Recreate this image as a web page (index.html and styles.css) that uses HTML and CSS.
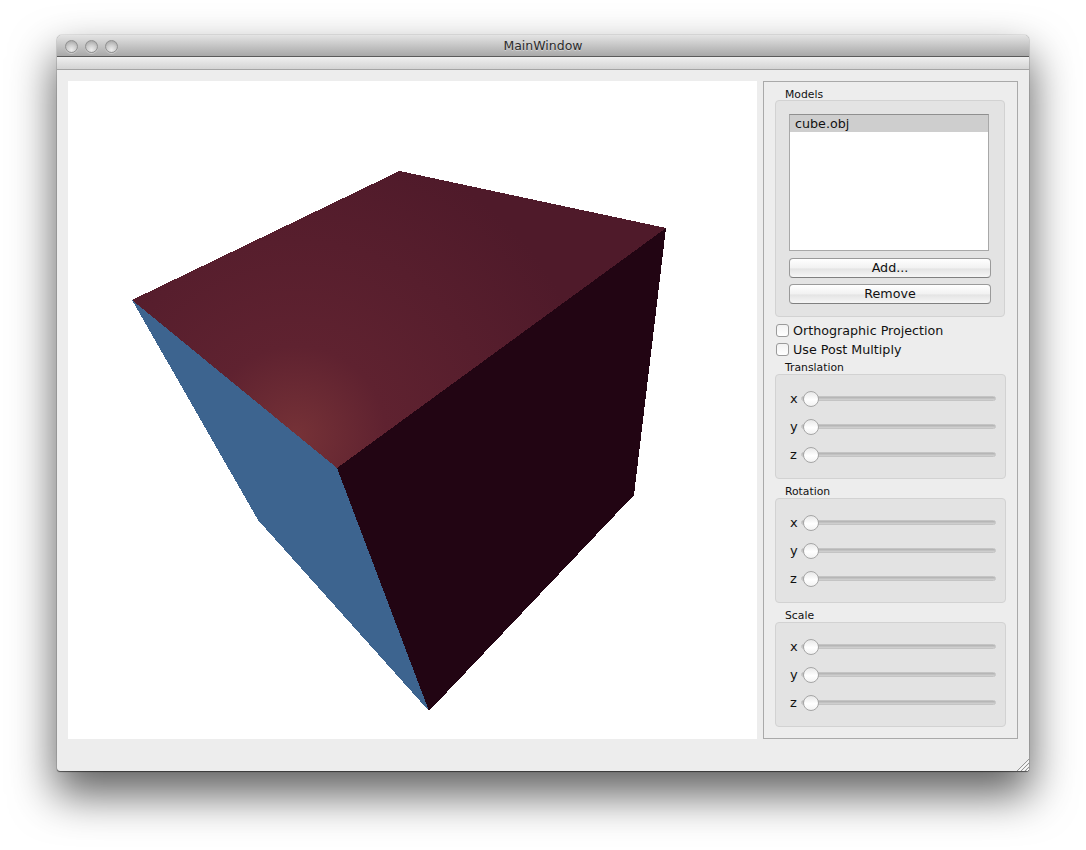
FILE: index.html
```html
<!DOCTYPE html>
<html lang="en">
<head>
    <meta charset="UTF-8">
    <title>MainWindow</title>
    <link rel="stylesheet" href="styles.css">
</head>
<body>
    <div class="window">
        <div class="titlebar">
            <div class="lights">
                <span class="light"></span>
                <span class="light"></span>
                <span class="light"></span>
            </div>
            <div class="title">MainWindow</div>
        </div>
        <div class="toolbar"></div>
        <div class="content">
            <svg class="viewport" viewBox="68 81 689 658" width="689" height="658" shape-rendering="crispEdges">
                <defs>
                    <radialGradient id="topGlow" gradientUnits="userSpaceOnUse" cx="296" cy="436" r="300">
                        <stop offset="0" stop-color="#763237"/>
                        <stop offset="0.3" stop-color="#5f2230"/>
                        <stop offset="1" stop-color="#4f1a2a"/>
                    </radialGradient>
                </defs>
                <polygon points="132,300 337,468 429,711 258,520" fill="#3d648f"/>
                <polygon points="666,228 634,495 429,711 337,468" fill="#220513"/>
                <polygon points="399.5,171 666,228 337,468 132,300" fill="url(#topGlow)"/>
            </svg>
            <div class="side">
                <div class="group-label models-label">Models</div>
                <div class="group models">
                    <div class="list">
                        <div class="list-item">cube.obj</div>
                    </div>
                    <button class="btn" type="button">Add...</button>
                    <button class="btn" type="button">Remove</button>
                </div>
                <label class="check first-check"><span class="box"></span>Orthographic Projection</label>
                <label class="check"><span class="box"></span>Use Post Multiply</label>

                <div class="group-label translation">Translation</div>
                <div class="group sliders">
                    <div class="row"><span class="axis">x</span><div class="track"><span class="thumb"></span></div></div>
                    <div class="row"><span class="axis">y</span><div class="track"><span class="thumb"></span></div></div>
                    <div class="row"><span class="axis">z</span><div class="track"><span class="thumb"></span></div></div>
                </div>

                <div class="group-label next">Rotation</div>
                <div class="group sliders">
                    <div class="row"><span class="axis">x</span><div class="track"><span class="thumb"></span></div></div>
                    <div class="row"><span class="axis">y</span><div class="track"><span class="thumb"></span></div></div>
                    <div class="row"><span class="axis">z</span><div class="track"><span class="thumb"></span></div></div>
                </div>

                <div class="group-label next">Scale</div>
                <div class="group sliders">
                    <div class="row"><span class="axis">x</span><div class="track"><span class="thumb"></span></div></div>
                    <div class="row"><span class="axis">y</span><div class="track"><span class="thumb"></span></div></div>
                    <div class="row"><span class="axis">z</span><div class="track"><span class="thumb"></span></div></div>
                </div>
            </div>
        </div>
        <svg class="grip" viewBox="0 0 12 12" width="12" height="12">
            <path d="M0 12 L12 0 M4 12 L12 4 M8 12 L12 8" stroke="#969696" stroke-width="1" fill="none"/>
            <path d="M2 12 L12 2 M6 12 L12 6 M10 12 L12 10" stroke="#fafafa" stroke-width="1" fill="none"/>
        </svg>
    </div>
</body>
</html>
```

FILE: styles.css
```css
html, body {
    margin: 0;
    height: 850px;
    background-color: #ffffff;
    overflow: hidden;
}

body {
    padding: 35px 0 0 57px;
    box-sizing: border-box;
    font-family: 'DejaVu Sans', 'Open Sans', sans-serif;
    color: #111111;
}

.window {
    position: relative;
    width: 972px;
    height: 736px;
    display: flex;
    flex-direction: column;
    background-color: #ededed;
    border-radius: 5px 5px 3px 3px;
    box-shadow: 0 22px 44px 2px rgba(0, 0, 0, 0.62), 0 0 1px rgba(0, 0, 0, 0.7), 0 1px 1px rgba(0, 0, 0, 0.5);
}

.titlebar {
    height: 21px;
    flex: none;
    position: relative;
    display: flex;
    align-items: center;
    justify-content: center;
    background: linear-gradient(#e4e4e4, #a8a8a8);
    border-bottom: 1px solid #5a5a5a;
    border-radius: 5px 5px 0 0;
}

.lights {
    position: absolute;
    left: 8px;
    top: 5px;
    display: flex;
    gap: 7px;
}

.light {
    box-sizing: border-box;
    width: 13px;
    height: 13px;
    border-radius: 50%;
    border: 1px solid #909090;
    background: radial-gradient(circle at 50% 80%, #ececec 0, #cfcfcf 45%, #a6a6a6 90%);
    box-shadow: 0 1px 0 rgba(255, 255, 255, 0.35);
}

.title {
    font-size: 12.5px;
    color: #2c2c2c;
    text-shadow: 0 1px 0 rgba(255, 255, 255, 0.4);
}

.toolbar {
    height: 12px;
    flex: none;
    background: linear-gradient(#efefef, #d4d4d4);
    border-bottom: 1px solid #a4a4a4;
}

.content {
    flex: 1;
    display: flex;
    gap: 6px;
    padding: 11px 11px 31px 11px;
    min-height: 0;
}

.viewport {
    display: block;
    flex: none;
    background-color: #ffffff;
}

.side {
    width: 255px;
    height: 658px;
    box-sizing: border-box;
    flex: none;
    border: 1px solid #a9a9a9;
    padding: 5px 11px 0 11px;
}

.group-label {
    font-size: 10.8px;
    line-height: 13px;
    height: 13px;
    margin-left: 10px;
    color: #111111;
}

.models-label {
    line-height: 15px;
}

.group-label.translation {
    margin-top: 2px;
}

.group-label.next {
    margin-top: 6px;
}

.group {
    box-sizing: border-box;
    width: 231px;
    background-color: #e3e3e3;
    border: 1px solid #d2d2d2;
    border-radius: 4px;
}

.models {
    width: 230px;
    height: 217px;
    padding: 13px 13px 0 13px;
}

.list {
    box-sizing: border-box;
    width: 200px;
    height: 137px;
    margin-bottom: 7px;
    background-color: #ffffff;
    border: 1px solid #a8a8a8;
    border-top-color: #8f8f8f;
}

.list-item {
    height: 17px;
    padding-left: 5px;
    font-size: 12.7px;
    line-height: 17px;
    background-color: #cecece;
}

.btn {
    display: block;
    box-sizing: border-box;
    width: 202px;
    height: 20px;
    padding: 0;
    margin-bottom: 6px;
    font-family: inherit;
    font-size: 12.7px;
    line-height: 18px;
    color: #111111;
    background: linear-gradient(#ffffff, #f1f1f1 50%, #e4e4e4 55%, #f6f6f6);
    border: 1px solid #9a9a9a;
    border-bottom-color: #808080;
    border-radius: 4px;
}

.check {
    display: flex;
    align-items: center;
    gap: 4px;
    height: 19px;
    margin-left: 1px;
    font-size: 12.7px;
}

.first-check {
    margin-top: 4px;
}

.box {
    box-sizing: border-box;
    width: 13px;
    height: 13px;
    background: linear-gradient(#f2f2f2, #ffffff);
    border: 1px solid #9a9a9a;
    border-radius: 3px;
}

.sliders {
    height: 105px;
    padding: 10px 9px 0 14px;
}

.row {
    display: flex;
    align-items: center;
    height: 28px;
}

.axis {
    width: 11px;
    flex: none;
    font-size: 13px;
    line-height: 28px;
}

.track {
    position: relative;
    flex: 1;
    height: 5px;
    margin-top: -2px;
    background: linear-gradient(#b0b0b0, #d4d4d4);
    border: 1px solid #c4c4c4;
    box-sizing: border-box;
    border-radius: 3px;
}

.thumb {
    position: absolute;
    left: 1px;
    top: -6px;
    box-sizing: border-box;
    width: 16px;
    height: 16px;
    border-radius: 50%;
    background: linear-gradient(#e8e8e8, #ffffff 55%, #f2f2f2);
    border: 1px solid #a6a6a6;
}

.grip {
    position: absolute;
    right: 0;
    bottom: 0;
}
```
